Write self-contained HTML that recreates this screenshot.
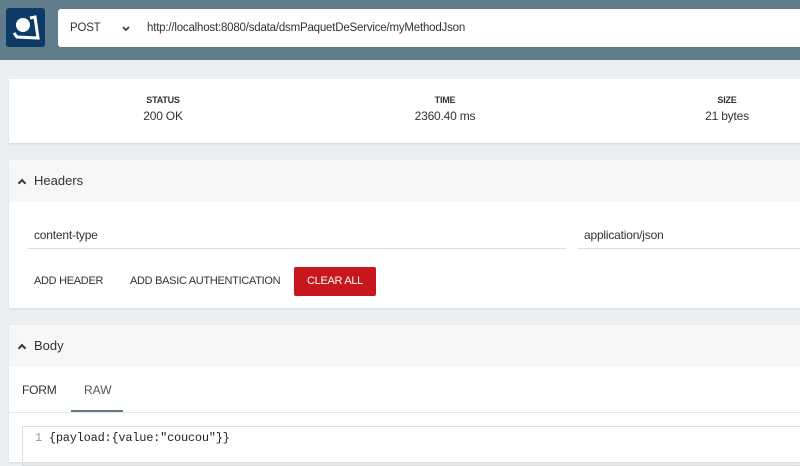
<!DOCTYPE html>
<html><head><style>
*{margin:0;padding:0;box-sizing:border-box}
body{width:800px;height:462px;overflow:hidden;background:#eceff1;font-family:"Liberation Sans",sans-serif;color:#333;position:relative}
.top{position:absolute;left:0;top:0;width:800px;height:60px;background:#607d8b}
.logo{position:absolute;left:6px;top:8px;width:39px;height:39px;background:#0d3a66;border-radius:3px}
.url{position:absolute;left:58px;top:9px;width:742px;height:38px;background:#fff;border-radius:3px 0 0 3px;font-size:11.5px;letter-spacing:-0.2px}
.card{position:absolute;left:9px;width:791px;background:#fff;box-shadow:0 1px 2px rgba(0,0,0,.1)}
.st{position:absolute;text-align:center;width:120px;font-size:12px;letter-spacing:-0.2px}
.st b{display:block;font-size:9px;font-weight:bold;margin-bottom:4px}
.hd{height:42px;background:#f7f7f7;font-size:13px;line-height:42px;padding-left:25px;position:relative}
.hd:before{content:"";position:absolute;left:10px;top:20px;width:4px;height:4px;border-left:2px solid #333;border-top:2px solid #333;transform:rotate(45deg)}
.btn{position:absolute;font-size:11px;letter-spacing:-0.3px}
</style></head><body>
<div class="top"></div>
<div class="logo"><svg width="39" height="39"><circle cx="17" cy="17" r="7" fill="#fff"/><path d="M24 10 L29 9 L32 30 L11 29 L8 25" fill="none" stroke="#fff" stroke-width="3"/></svg></div>
<div class="url"><span style="position:absolute;left:12px;top:13px">POST</span><svg style="position:absolute;left:64px;top:17px" width="8" height="6"><path d="M1 1 L4 4 L7 1" fill="none" stroke="#333" stroke-width="1.6"/></svg><span style="position:absolute;left:89px;top:13px">http://localhost:8080/sdata/dsmPaquetDeService/myMethodJson</span></div>
<div class="card" style="top:79px;height:64px">
<div class="st" style="left:94px;top:16px"><b>STATUS</b>200 OK</div>
<div class="st" style="left:376px;top:16px"><b>TIME</b>2360.40 ms</div>
<div class="st" style="left:658px;top:16px"><b>SIZE</b>21 bytes</div>
</div>
<div class="card" style="top:160px;height:148px">
<div class="hd">Headers</div>
<div style="position:absolute;left:19px;top:68px;width:538px;font-size:12px;letter-spacing:-0.2px;padding-left:6px;height:21px;border-bottom:1px solid #ddd">content-type</div>
<div style="position:absolute;left:569px;top:68px;width:222px;font-size:12px;letter-spacing:-0.2px;padding-left:6px;height:21px;border-bottom:1px solid #ddd">application/json</div>
<span class="btn" style="left:25px;top:115px">ADD HEADER</span>
<span class="btn" style="left:121px;top:115px">ADD BASIC AUTHENTICATION</span>
<div style="position:absolute;left:285px;top:107px;width:82px;height:29px;background:#c8161d;color:#fff;font-size:11px;letter-spacing:-0.3px;line-height:29px;text-align:center;border-radius:2px">CLEAR ALL</div>
</div>
<div class="card" style="top:325px;height:137px">
<div class="hd">Body</div>
<div style="position:absolute;left:13px;top:58px;font-size:12px;letter-spacing:-0.2px">FORM</div>
<div style="position:absolute;left:75px;top:58px;font-size:12px;color:#555">RAW</div>
<div style="position:absolute;left:62px;top:85px;width:52px;height:3px;background:#607d8b"></div>
<div style="position:absolute;left:0;top:87px;width:791px;height:1px;background:#e5e5e5"></div>
<div style="position:absolute;left:13px;top:101px;width:778px;height:40px;border:1px solid #ddd;border-right:none;font-family:'Liberation Mono',monospace;font-size:12px;letter-spacing:-0.25px;padding:4px 0 0 12px;color:#222"><span style="color:#999">1</span> {payload:{value:"coucou"}}</div>
</div>
</body></html>
